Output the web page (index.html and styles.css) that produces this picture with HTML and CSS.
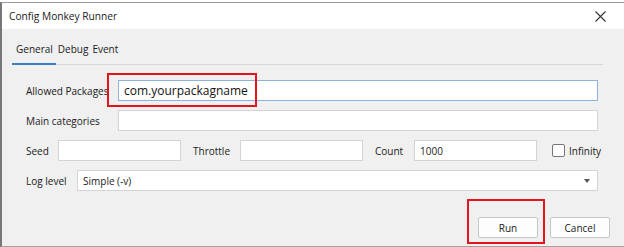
FILE: index.html
```html
<!DOCTYPE html>
<html lang="en">
<head>
    <meta charset="UTF-8">
    <title>Config Monkey Runner</title>
    <link rel="stylesheet" href="styles.css">
</head>
<body>
    <div class="window">
        <div class="titlebar">
            <span class="title">Config Monkey Runner</span>
            <svg class="close" width="11" height="11" viewBox="0 0 11 11">
                <path d="M0.5 0.5 L10.5 10.5 M10.5 0.5 L0.5 10.5" stroke="#333" stroke-width="1.1" fill="none"/>
            </svg>
        </div>
        <div class="content">
            <div class="tabs">
                <span class="tab active">General</span>
                <span class="tab">Debug</span>
                <span class="tab">Event</span>
            </div>
            <div class="form">
                <div class="row">
                    <label class="label wide">Allowed Packages</label>
                    <div class="field focus">com.yourpackagname</div>
                    <div class="mark mark-pkg"></div>
                </div>
                <div class="row">
                    <label class="label wide">Main categories</label>
                    <div class="field"></div>
                </div>
                <div class="row">
                    <label class="label seed">Seed</label>
                    <div class="field small"></div>
                    <label class="label throttle">Throttle</label>
                    <div class="field small"></div>
                    <label class="label count">Count</label>
                    <div class="field small">1000</div>
                    <span class="check"></span>
                    <label class="label">Infinity</label>
                </div>
                <div class="row">
                    <label class="label log">Log level</label>
                    <div class="field select">
                        <span>Simple (-v)</span>
                        <span class="arrow"></span>
                    </div>
                </div>
            </div>
            <div class="footer">
                <div class="run-wrap">
                    <button class="btn">Run</button>
                    <div class="mark mark-run"></div>
                </div>
                <button class="btn">Cancel</button>
            </div>
        </div>
    </div>
</body>
</html>
```
FILE: styles.css
```css
body {
    margin: 0;
    background: #fff;
    font-family: "Open Sans", "Noto Sans", sans-serif;
    font-size: 10px;
    color: #1a1a1a;
}
.window {
    margin-top: 2px;
    width: 622px;
    height: 243px;
    border-top: 1px solid #9a9a9a;
    border-left: 2px solid #777;
    border-bottom: 1px solid #a0a0a0;
    display: flex;
    flex-direction: column;
}
.titlebar {
    height: 26px;
    background: #fff;
    display: flex;
    align-items: center;
    justify-content: space-between;
    padding: 0 18px 0 7px;
}
.title {
    font-size: 10.2px;
    color: #222;
}
.content {
    flex: 1;
    background: #f0f0f0;
    padding: 0 21px 0 10px;
    position: relative;
}
.tabs {
    display: flex;
    padding-top: 13px;
    border-bottom: 1px solid #d6d6d6;
}
.tab {
    padding: 0 2px 7px 2px;
    border-bottom: 2px solid transparent;
    margin-bottom: -1px;
}
.tab.active {
    border-bottom-color: #3d7cc9;
    padding-left: 4px;
    padding-right: 3px;
}
.form {
    padding: 15px 5px 0 14px;
    display: flex;
    flex-direction: column;
    gap: 9px;
}
.row {
    display: flex;
    align-items: center;
    height: 21px;
    position: relative;
}
.label {
    white-space: nowrap;
    flex: none;
}
.label.wide {
    width: 92px;
}
.label.seed {
    width: 32px;
}
.label.throttle {
    margin-left: 12px;
    width: 47px;
}
.label.count {
    margin-left: 12px;
    width: 39px;
}
.label.log {
    width: 51px;
}
.field {
    flex: 1;
    height: 19px;
    background: #fff;
    border: 1px solid #d4d4d4;
    display: flex;
    align-items: center;
    padding: 0 5px;
}
.field.focus {
    border-color: #8fb3e0;
    font-size: 12px;
    color: #111;
}
.field.small {
    flex: none;
    width: 111px;
}
.field.select {
    justify-content: space-between;
    padding-right: 7px;
}
.arrow {
    width: 0;
    height: 0;
    border-left: 3.5px solid transparent;
    border-right: 3.5px solid transparent;
    border-top: 4px solid #555;
}
.check {
    width: 11px;
    height: 11px;
    border: 1px solid #777;
    border-radius: 2px;
    background: #fff;
    margin: 0 4px 0 15px;
    flex: none;
}
.footer {
    display: flex;
    justify-content: flex-end;
    gap: 12px;
    margin-top: 26px;
    margin-right: -7px;
}
.btn {
    width: 60px;
    height: 21px;
    background: #fdfdfd;
    border: 1px solid #c8c8c8;
    border-radius: 2px;
    font-family: inherit;
    font-size: 10px;
    color: #1a1a1a;
    padding: 0;
}
.run-wrap {
    position: relative;
}
.mark {
    position: absolute;
    border: 2.5px solid #e3141b;
}
.mark-pkg {
    left: 81px;
    top: -7px;
    width: 146px;
    height: 30px;
}
.mark-run {
    left: -11px;
    top: -18px;
    width: 74px;
    height: 41px;
}
```
